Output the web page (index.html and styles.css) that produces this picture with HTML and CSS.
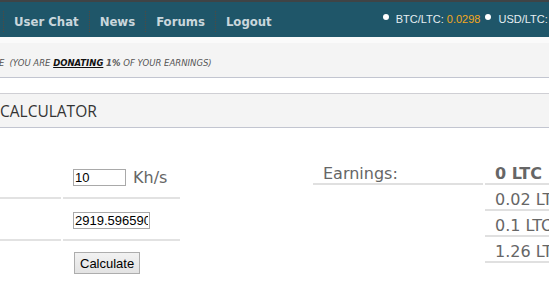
FILE: index.html
```html
<!DOCTYPE html>
<html>
<head>
<meta charset="utf-8">
<link rel="stylesheet" href="styles.css">
</head>
<body>
<div class="page">
  <header class="nav">
    <ul class="menu">
      <li class="menu-item">User Chat</li>
      <li class="menu-item">News</li>
      <li class="menu-item">Forums</li>
      <li class="menu-item">Logout</li>
    </ul>
    <div class="ticker">
      <span class="tick"><span class="dot"></span>BTC/LTC: <span class="orange">0.0298</span></span>
      <span class="tick"><span class="dot"></span>USD/LTC: <span class="green">$1.25</span></span>
    </div>
  </header>
  <div class="strip"></div>
  <div class="donate"><span class="clip">E</span>(YOU ARE <a class="donlink">DONATING</a> <b>1%</b> OF YOUR EARNINGS)</div>
  <div class="gap"></div>
  <div class="title"><h2>CALCULATOR</h2></div>
  <div class="content">
    <table class="form">
      <tr class="row bordered">
        <td class="label"></td>
        <td class="field"><input class="inp short" value="10"> <span class="unit">Kh/s</span></td>
      </tr>
      <tr class="row bordered">
        <td class="label"></td>
        <td class="field"><input class="inp long" value="2919.59659020"></td>
      </tr>
      <tr class="row">
        <td class="label"></td>
        <td class="field"><button class="btn">Calculate</button></td>
      </tr>
    </table>
    <table class="earn">
      <tr>
        <td class="ename">Earnings:</td>
        <td class="eval strong">0 LTC</td>
      </tr>
      <tr>
        <td class="blank"></td>
        <td class="eval">0.02 LTC</td>
      </tr>
      <tr>
        <td class="blank"></td>
        <td class="eval">0.1 LTC</td>
      </tr>
      <tr>
        <td class="blank"></td>
        <td class="eval">1.26 LTC</td>
      </tr>
    </table>
  </div>
</div>
</body>
</html>
```

FILE: styles.css
```css
html, body {
  margin: 0;
  padding: 0;
  background: #fff;
  overflow: hidden;
}
.page {
  width: 900px;
}
.nav {
  display: flex;
  align-items: center;
  height: 35px;
  background: #1f5669;
  border-top: 2px solid #3f4446;
  white-space: nowrap;
}
.menu {
  display: flex;
  list-style: none;
  margin: 3px 0 0 3px;
  padding: 0;
}
.menu-item {
  font-family: "DejaVu Sans Condensed", "DejaVu Sans", sans-serif;
  font-weight: bold;
  font-size: 13px;
  color: #c9d6dc;
  padding: 2px 10px 1px 10px;
  line-height: 18px;
  border-left: 1px dotted #52493f;
}
.ticker {
  display: flex;
  margin-left: 101px;
  gap: 5px;
  font-family: "Liberation Sans", Arial, sans-serif;
  font-size: 11px;
  color: #e6eef2;
  margin-top: -2px;
}
.tick {
  display: flex;
  align-items: center;
}
.dot {
  width: 6px;
  height: 6px;
  border-radius: 50%;
  background: #fff;
  margin-right: 7px;
  position: relative;
  top: -2px;
}
.orange { color: #f2a81d; margin-left: 3px; }
.green { color: #7dc142; margin-left: 3px; }
.strip {
  height: 6px;
  background: #fafafa;
}
.donate {
  height: 35px;
  line-height: 35px;
  background: #f4f4f4;
  border-bottom: 1px solid #c2c5d0;
  font-family: "DejaVu Sans", Verdana, sans-serif;
  font-style: italic;
  font-size: 8.5px;
  color: #555;
  white-space: nowrap;
  padding-top: 3px;
  box-sizing: border-box;
}
.clip {
  margin-left: -1px;
  margin-right: 5px;
}
.donlink {
  font-weight: bold;
  color: #111;
  text-decoration: underline;
}
.donate b { font-weight: bold; }
.gap {
  height: 15px;
  border-bottom: 1px solid #cfcfd4;
}
.title {
  height: 33px;
  background: #f4f4f4;
  border-bottom: 1px solid #c2c5d0;
  display: flex;
  align-items: center;
}
.title h2 {
  margin: 1px 0 0 0;
  font-family: "Open Sans", sans-serif;
  font-weight: normal;
  font-size: 15.5px;
  color: #333;
}
.content {
  display: flex;
  align-items: flex-start;
  margin-top: 29px;
}
table {
  border-collapse: separate;
  border-spacing: 2px 0;
}
.form {
  margin-left: -2px;
  flex: none;
}
.label {
  width: 61px;
  padding: 0;
}
.row td {
  height: 40px;
  padding: 0;
}
.row.bordered td {
  border-bottom: 2px solid #e2e2e2;
}
.field {
  width: 107px;
  padding-left: 10px !important;
}
.inp {
  font-family: "Liberation Sans", Arial, sans-serif;
  font-size: 13px;
  border: 1px solid #a9a9a9;
  padding: 0 1px;
  height: 17px;
  box-sizing: border-box;
  color: #000;
  margin: 1px 0 0 0;
  vertical-align: middle;
}
.short { width: 53px; }
.long { width: 77px; }
.unit {
  font-family: "DejaVu Sans", Verdana, sans-serif;
  font-size: 16px;
  color: #666;
  vertical-align: middle;
  margin-left: 3px;
}
.btn {
  font-family: "Liberation Sans", Arial, sans-serif;
  font-size: 13px;
  border: 1px solid #adadad;
  background: linear-gradient(#f2f2f2, #e3e3e3);
  padding: 2px 5px;
  height: 22px;
  margin: 4px 0 0 1px;
  color: #000;
}
.earn {
  flex: none;
  margin-left: 129px;
  margin-top: 2px;
  font-family: "DejaVu Sans", Verdana, sans-serif;
  font-size: 16px;
  color: #666;
}
.earn td {
  height: 18px;
  padding: 6px 0 0 10px;
  border-bottom: 2px solid #e0e0e0;
  white-space: nowrap;
  vertical-align: bottom;
  line-height: 18px;
}
.ename {
  width: 160px;
}
.earn td.blank {
  border-bottom: none;
}
.eval {
  width: 80px;
}
.strong {
  font-weight: bold;
}
```
